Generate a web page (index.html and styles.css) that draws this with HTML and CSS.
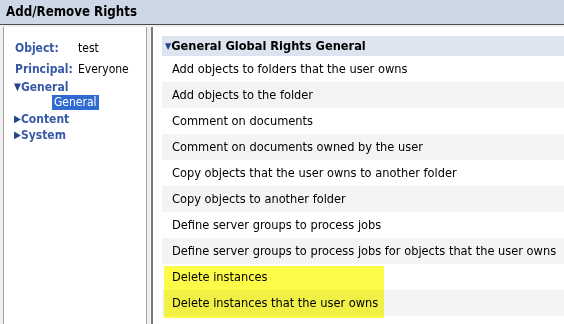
FILE: index.html
```html
<!DOCTYPE html>
<html lang="en">
<head>
  <meta charset="UTF-8" />
  <title>Add/Remove Rights</title>
  <link rel="stylesheet" href="styles.css">
</head>
<body>
  <div class="titlebar">Add/Remove Rights</div>
  <div class="main">
    <div class="side">
      <div class="info">
        <span class="label">Object:</span><span>test</span>
      </div>
      <div class="info">
        <span class="label">Principal:</span><span>Everyone</span>
      </div>
      <ul class="tree">
        <li class="node"><span class="arrow">&#9660;</span>General</li>
        <li class="leaf"><span class="selected">General</span></li>
        <li class="node"><span class="arrow">&#9654;</span>Content</li>
        <li class="node"><span class="arrow">&#9654;</span>System</li>
      </ul>
    </div>
    <div class="content">
      <div class="group-head"><span class="arrow">&#9660;</span>General Global Rights General</div>
      <div class="row">Add objects to folders that the user owns</div>
      <div class="row alt">Add objects to the folder</div>
      <div class="row">Comment on documents</div>
      <div class="row alt">Comment on documents owned by the user</div>
      <div class="row">Copy objects that the user owns to another folder</div>
      <div class="row alt">Copy objects to another folder</div>
      <div class="row">Define server groups to process jobs</div>
      <div class="row alt">Define server groups to process jobs for objects that the user owns</div>
      <!-- highlighted by hand in the screenshot -->
      <div class="marked">
        <div class="row">Delete instances</div>
        <div class="row alt">Delete instances that the user owns</div>
      </div>
      <div class="row"></div>
    </div>
  </div>
</body>
</html>
```

FILE: styles.css
```css
body {
  margin: 0;
  width: 564px;
  height: 324px;
  overflow: hidden;
  background-color: #f0f0f0;
  font-family: "DejaVu Sans Condensed", "DejaVu Sans", sans-serif;
  font-size: 12.7px;
  color: #000;
}
.titlebar {
  height: 24px;
  line-height: 24px;
  padding-left: 6px;
  background-color: #cdd8e6;
  border-bottom: 1px solid #4a4a4a;
  font-weight: bold;
  font-size: 13.2px;
}
.main {
  display: flex;
  height: 299px;
  padding-top: 2px;
}
.side {
  width: 142px;
  margin-left: 3px;
  padding: 11px 0 0 0;
  background: white;
  border-left: 1px solid #a0a0a0;
  border-right: 1px solid #a0a0a0;
  font-size: 12px;
}
.info {
  display: flex;
  height: 20px;
  line-height: 20px;
  padding-left: 11px;
}
.info + .info {
  margin-top: 1px;
}
.label {
  width: 63px;
  font-weight: bold;
  color: #3559a8;
}
.tree {
  list-style: none;
  margin: 0;
  padding: 0 0 0 10px;
}
.tree li {
  height: 16px;
  line-height: 15px;
  font-weight: bold;
  color: #3559a8;
}
.tree .arrow {
  font-size: 10px;
  color: #24438a;
  vertical-align: 1px;
}
.tree .leaf {
  padding-left: 38px;
  font-weight: normal;
}
.selected {
  display: inline-block;
  padding: 0 2px;
  background-color: #2f6bd0;
  color: white;
}
.content {
  flex: 1;
  margin-left: 4px;
  padding: 9px 0 0 9px;
  background: white;
  border-left: 2px solid #7a7a7a;
  overflow: hidden;
}
.group-head {
  height: 20px;
  line-height: 20px;
  padding-left: 3px;
  background-color: #dde4ef;
  font-weight: bold;
  white-space: nowrap;
}
.group-head .arrow {
  font-size: 9px;
  color: #24438a;
  vertical-align: 1px;
}
.row {
  height: 26px;
  line-height: 26px;
  padding-left: 10px;
  white-space: nowrap;
}
.row.alt {
  background-color: #f4f4f4;
}
.marked {
  position: relative;
}
.marked::after {
  content: "";
  position: absolute;
  left: 2px;
  top: 2px;
  width: 220px;
  height: 52px;
  background-color: #fbfb48;
  mix-blend-mode: multiply;
}
```
